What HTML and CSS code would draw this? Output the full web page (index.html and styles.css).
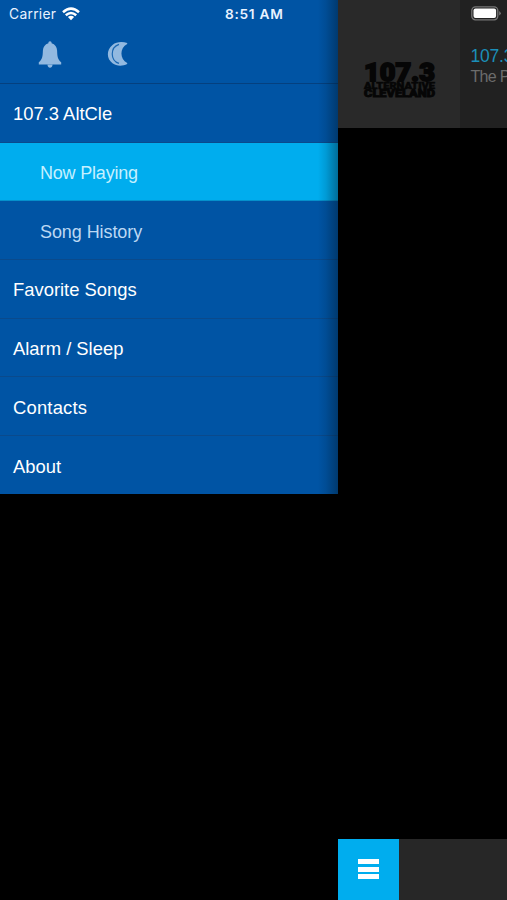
FILE: index.html
```html
<!DOCTYPE html>
<html lang="en">
<head>
<meta charset="utf-8">
<title>107.3 AltCle</title>
<link rel="stylesheet" href="styles.css">
</head>
<body>
<div class="screen">
  <aside class="drawer">
    <header class="drawer-head">
      <div class="status">
        <span class="carrier">Carrier</span>
        <svg class="wifi" width="18" height="14" viewBox="0 0 18 14" fill="none" stroke="#fff" stroke-width="2.5">
          <path d="M1 5.2Q9-2 17 5.2M3.8 8.3Q9 3.7 14.2 8.3"/>
          <path d="M5.9 10Q9 7.5 12.1 10L9 13.3Z" fill="#fff" stroke="none"/>
        </svg>
        <span class="time">8:51 AM</span>
      </div>
      <div class="tools">
        <svg width="24" height="27" viewBox="0 0 24 27" fill="#92b9e0">
          <path d="M12 .3C13.1.3 13.6 1 13.6 2.2C17 3.2 18.9 6 19.1 9.5C19.3 15.3 19.6 18.5 23.2 21.2V23.5H.8V21.2C4.4 18.5 4.7 15.3 4.9 9.5C5.1 6 7 3.2 10.4 2.2C10.4 1 10.9.3 12 .3Z"/>
          <path d="M9.4 23.4H14.6C14.3 25.7 13.4 26.7 12 26.7S9.7 25.7 9.4 23.4Z"/>
        </svg>
        <svg width="21" height="25" viewBox="0 0 21 25">
          <path fill="#92b9e0" d="M20.2 2C15.6.3 9.5.5 5.5 3.9C-.7 8.9-.7 17.6 5.5 22.2C9.5 25.3 15.4 25.3 20.2 23.1V22C12.5 18 12.5 7 20.2 3Z"/>
          <path fill="none" stroke="#1b68b3" stroke-width="1.2" d="M12 3.4C3 6.5 3 19.4 12 22.4"/>
        </svg>
      </div>
    </header>
    <nav class="menu">
      <a class="item">107.3 AltCle</a>
      <a class="item sub active">Now Playing</a>
      <a class="item sub history">Song History</a>
      <a class="item">Favorite Songs</a>
      <a class="item">Alarm / Sleep</a>
      <a class="item contacts">Contacts</a>
      <a class="item">About</a>
    </nav>
  </aside>
  <main class="player">
    <header class="station">
      <div class="art">
        <svg width="74" height="40" viewBox="0 0 74 40">
          <g class="logo">
            <text x="1" y="20.8" font-size="26.5" stroke-width="1.8" textLength="71" lengthAdjust="spacingAndGlyphs">107.3</text>
            <text x="1" y="28.8" font-size="8.2" stroke-width=".5" textLength="71" lengthAdjust="spacingAndGlyphs">ALTERNATIVE</text>
            <text x="1" y="37.4" font-size="10" stroke-width=".8" textLength="71" lengthAdjust="spacingAndGlyphs">CLEVELAND</text>
          </g>
        </svg>
      </div>
      <div class="info">
        <svg class="battery" width="31" height="15" viewBox="0 0 31 15">
          <rect x=".8" y=".8" width="26" height="13" rx="3.7" fill="none" stroke="#777" stroke-width="1.3"/>
          <rect x="2.5" y="2.5" width="22.6" height="9.6" rx="2" fill="#fff"/>
          <path d="M28.2 5Q31.4 7.3 28.2 9.6Z" fill="#777"/>
        </svg>
        <div class="name">107.3 AltCle</div>
        <div class="song">The Pretender</div>
      </div>
    </header>
    <footer class="bar">
      <div class="toggle"><i></i><i></i><i></i></div>
    </footer>
  </main>
</div>
</body>
</html>
```
FILE: styles.css
```css
* { box-sizing: border-box; }
body { margin: 0; background: #000; font-family: "Liberation Sans", Arial, sans-serif; color: #fff; }
.screen { display: flex; width: 507px; height: 900px; overflow: hidden; background: #000; }
.drawer { position: relative; flex: 0 0 338px; height: 494.4px; background: #0054a4; }
.drawer::after {
  content: ""; position: absolute; top: 0; right: 0; bottom: 0; width: 20px;
  background: linear-gradient(to right, rgba(0,20,35,0), rgba(0,20,35,.12) 40%, rgba(0,20,35,.42));
}
.drawer-head { height: 84px; border-bottom: 1px solid #04407f; }
.status { display: flex; height: 28px; align-items: center; padding-left: 9px; font-family: Inter, sans-serif; font-size: 13.8px; color: #e8f2ff; }
.carrier { width: 53px; letter-spacing: .3px; white-space: nowrap; }
.time { margin-left: 145px; font-size: 13.7px; font-weight: 600; letter-spacing: .7px; white-space: nowrap; }
.tools { display: flex; gap: 45px; padding: 13px 0 0 38px; align-items: flex-start; }
.menu { display: flex; flex-direction: column; height: 410.4px; }
.item { flex: 0 0 58.65px; display: flex; align-items: center; padding: 3px 0 0 13px; font-size: 18.4px; border-bottom: 1px solid #0a4a8c; }
.item:last-child { flex-basis: 58.5px; border-bottom: 0; }
.contacts { letter-spacing: .2px; }
.sub { padding-left: 40px; padding-top: 4px; font-size: 18px; letter-spacing: -.2px; color: #bcd8f3; }
.active { background: #00adee; border-bottom-color: #0590cc; color: #c5f0ff; }
.history { letter-spacing: -.08px; }
.player { flex: 1; min-width: 0; display: flex; flex-direction: column; justify-content: space-between; }
.station { display: flex; height: 128px; overflow: hidden; background: #212121; }
.art { flex: 0 0 122px; padding: 60px 0 0 25px; background: #292929; }
.logo { font-family: Roboto, sans-serif; font-weight: 900; fill: #060606; stroke: #060606; }
.info { flex: 1; min-width: 0; padding: 6px 0 0 10.5px; white-space: nowrap; overflow: hidden; }
.battery { display: block; }
.name { margin-top: 25px; font-size: 17.5px; line-height: 20px; letter-spacing: -.2px; color: #1b8fb8; }
.song { margin-top: 1px; font-size: 16px; line-height: 20px; letter-spacing: -.7px; color: #6c6c6c; }
.bar { height: 61px; background: #272727; }
.toggle { display: flex; flex-direction: column; align-items: center; gap: 2.5px; width: 61px; height: 61px; padding-top: 20.4px; background: #00adee; }
.toggle i { width: 20.4px; height: 5px; background: #fff; }
```
